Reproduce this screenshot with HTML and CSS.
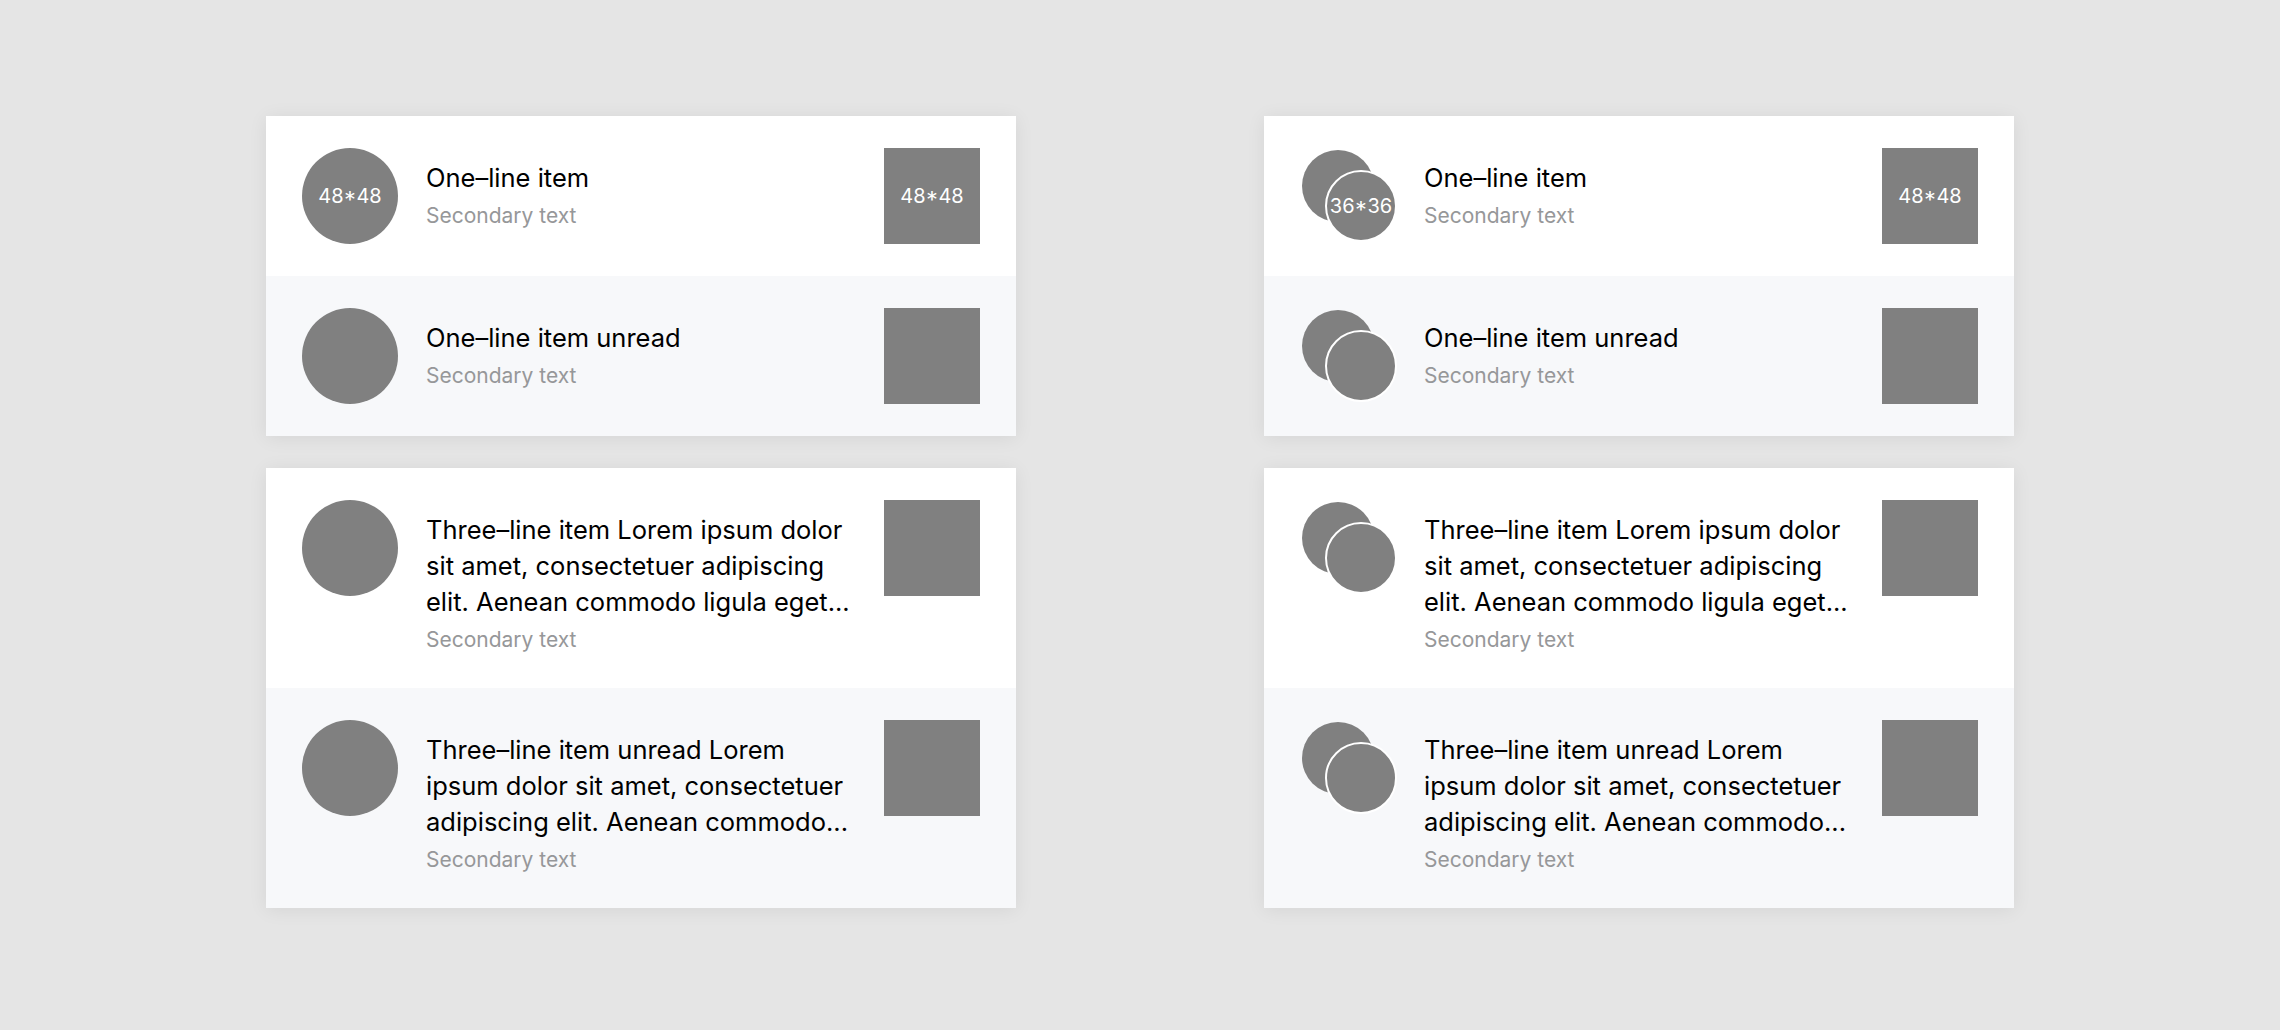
FILE: index.html
```html
<!DOCTYPE html>
<html lang="en">
<head>
<meta charset="utf-8">
<title>List items</title>
<link rel="stylesheet" href="styles.css">
</head>
<body>
<main class="board">
  <section class="card">
    <div class="row">
      <div class="avatar"><span class="label">48*48</span></div>
      <div class="text">
        <div class="title">One–line item</div>
        <div class="sub">Secondary text</div>
      </div>
      <div class="thumb"><span class="label">48*48</span></div>
    </div>
    <div class="row alt">
      <div class="avatar"></div>
      <div class="text">
        <div class="title">One–line item unread</div>
        <div class="sub">Secondary text</div>
      </div>
      <div class="thumb"></div>
    </div>
  </section>

  <section class="card">
    <div class="row">
      <div class="group">
        <div class="dot back"></div>
        <div class="dot front"><span class="label">36*36</span></div>
      </div>
      <div class="text">
        <div class="title">One–line item</div>
        <div class="sub">Secondary text</div>
      </div>
      <div class="thumb"><span class="label">48*48</span></div>
    </div>
    <div class="row alt">
      <div class="group">
        <div class="dot back"></div>
        <div class="dot front"></div>
      </div>
      <div class="text">
        <div class="title">One–line item unread</div>
        <div class="sub">Secondary text</div>
      </div>
      <div class="thumb"></div>
    </div>
  </section>

  <section class="card">
    <div class="row">
      <div class="avatar"></div>
      <div class="text">
        <div class="title multi">Three–line item Lorem ipsum dolor sit amet, consectetuer adipiscing elit. Aenean commodo ligula eget...</div>
        <div class="sub">Secondary text</div>
      </div>
      <div class="thumb"></div>
    </div>
    <div class="row alt">
      <div class="avatar"></div>
      <div class="text">
        <div class="title multi">Three–line item unread Lorem ipsum dolor sit amet, consectetuer adipiscing elit. Aenean commodo...</div>
        <div class="sub">Secondary text</div>
      </div>
      <div class="thumb"></div>
    </div>
  </section>

  <section class="card">
    <div class="row">
      <div class="group">
        <div class="dot back"></div>
        <div class="dot front"></div>
      </div>
      <div class="text">
        <div class="title multi">Three–line item Lorem ipsum dolor sit amet, consectetuer adipiscing elit. Aenean commodo ligula eget...</div>
        <div class="sub">Secondary text</div>
      </div>
      <div class="thumb"></div>
    </div>
    <div class="row alt">
      <div class="group">
        <div class="dot back"></div>
        <div class="dot front"></div>
      </div>
      <div class="text">
        <div class="title multi">Three–line item unread Lorem ipsum dolor sit amet, consectetuer adipiscing elit. Aenean commodo...</div>
        <div class="sub">Secondary text</div>
      </div>
      <div class="thumb"></div>
    </div>
  </section>
</main>
</body>
</html>
```

FILE: styles.css
```css
* {
  box-sizing: border-box;
}

html, body {
  margin: 0;
  padding: 0;
}

body {
  background: #e5e5e5;
  font-family: Inter, "Noto Sans", "Liberation Sans", sans-serif;
  min-height: 1030px;
}

.board {
  display: grid;
  grid-template-columns: 750px 750px;
  column-gap: 248px;
  row-gap: 32px;
  justify-content: center;
  align-items: start;
  padding-top: 116px;
}

.card {
  background: #ffffff;
  box-shadow: 0 2px 18px rgba(0, 0, 0, 0.07);
}

.row {
  display: flex;
  align-items: flex-start;
  padding: 32px 36px;
  background: #ffffff;
}

.row.alt {
  background: #f7f8fa;
}

.avatar {
  flex: 0 0 96px;
  width: 96px;
  height: 96px;
  border-radius: 50%;
  background: #808080;
  display: flex;
  align-items: center;
  justify-content: center;
  margin-right: 28px;
}

.group {
  flex: 0 0 96px;
  width: 96px;
  height: 96px;
  position: relative;
  margin-right: 28px;
}

.dot {
  position: absolute;
  width: 72px;
  height: 72px;
  border-radius: 50%;
  background: #808080;
  display: flex;
  align-items: center;
  justify-content: center;
}

.dot.back {
  left: 2px;
  top: 2px;
}

.dot.front {
  left: 25px;
  top: 22px;
  border: 2px solid #ffffff;
}

.thumb {
  flex: 0 0 96px;
  width: 96px;
  height: 96px;
  background: #808080;
  display: flex;
  align-items: center;
  justify-content: center;
}

.label {
  color: #ffffff;
  font-size: 20px;
  line-height: 1;
}

.text {
  flex: 1 1 auto;
  min-width: 0;
  margin-right: 26px;
  padding-top: 12px;
}

.title {
  color: #000000;
  font-size: 25.5px;
  line-height: 36px;
}

.title.multi {
  display: -webkit-box;
  -webkit-box-orient: vertical;
  -webkit-line-clamp: 3;
  overflow: hidden;
}

.sub {
  color: #969799;
  font-size: 21px;
  line-height: 40px;
  margin-bottom: -4px;
}
```
